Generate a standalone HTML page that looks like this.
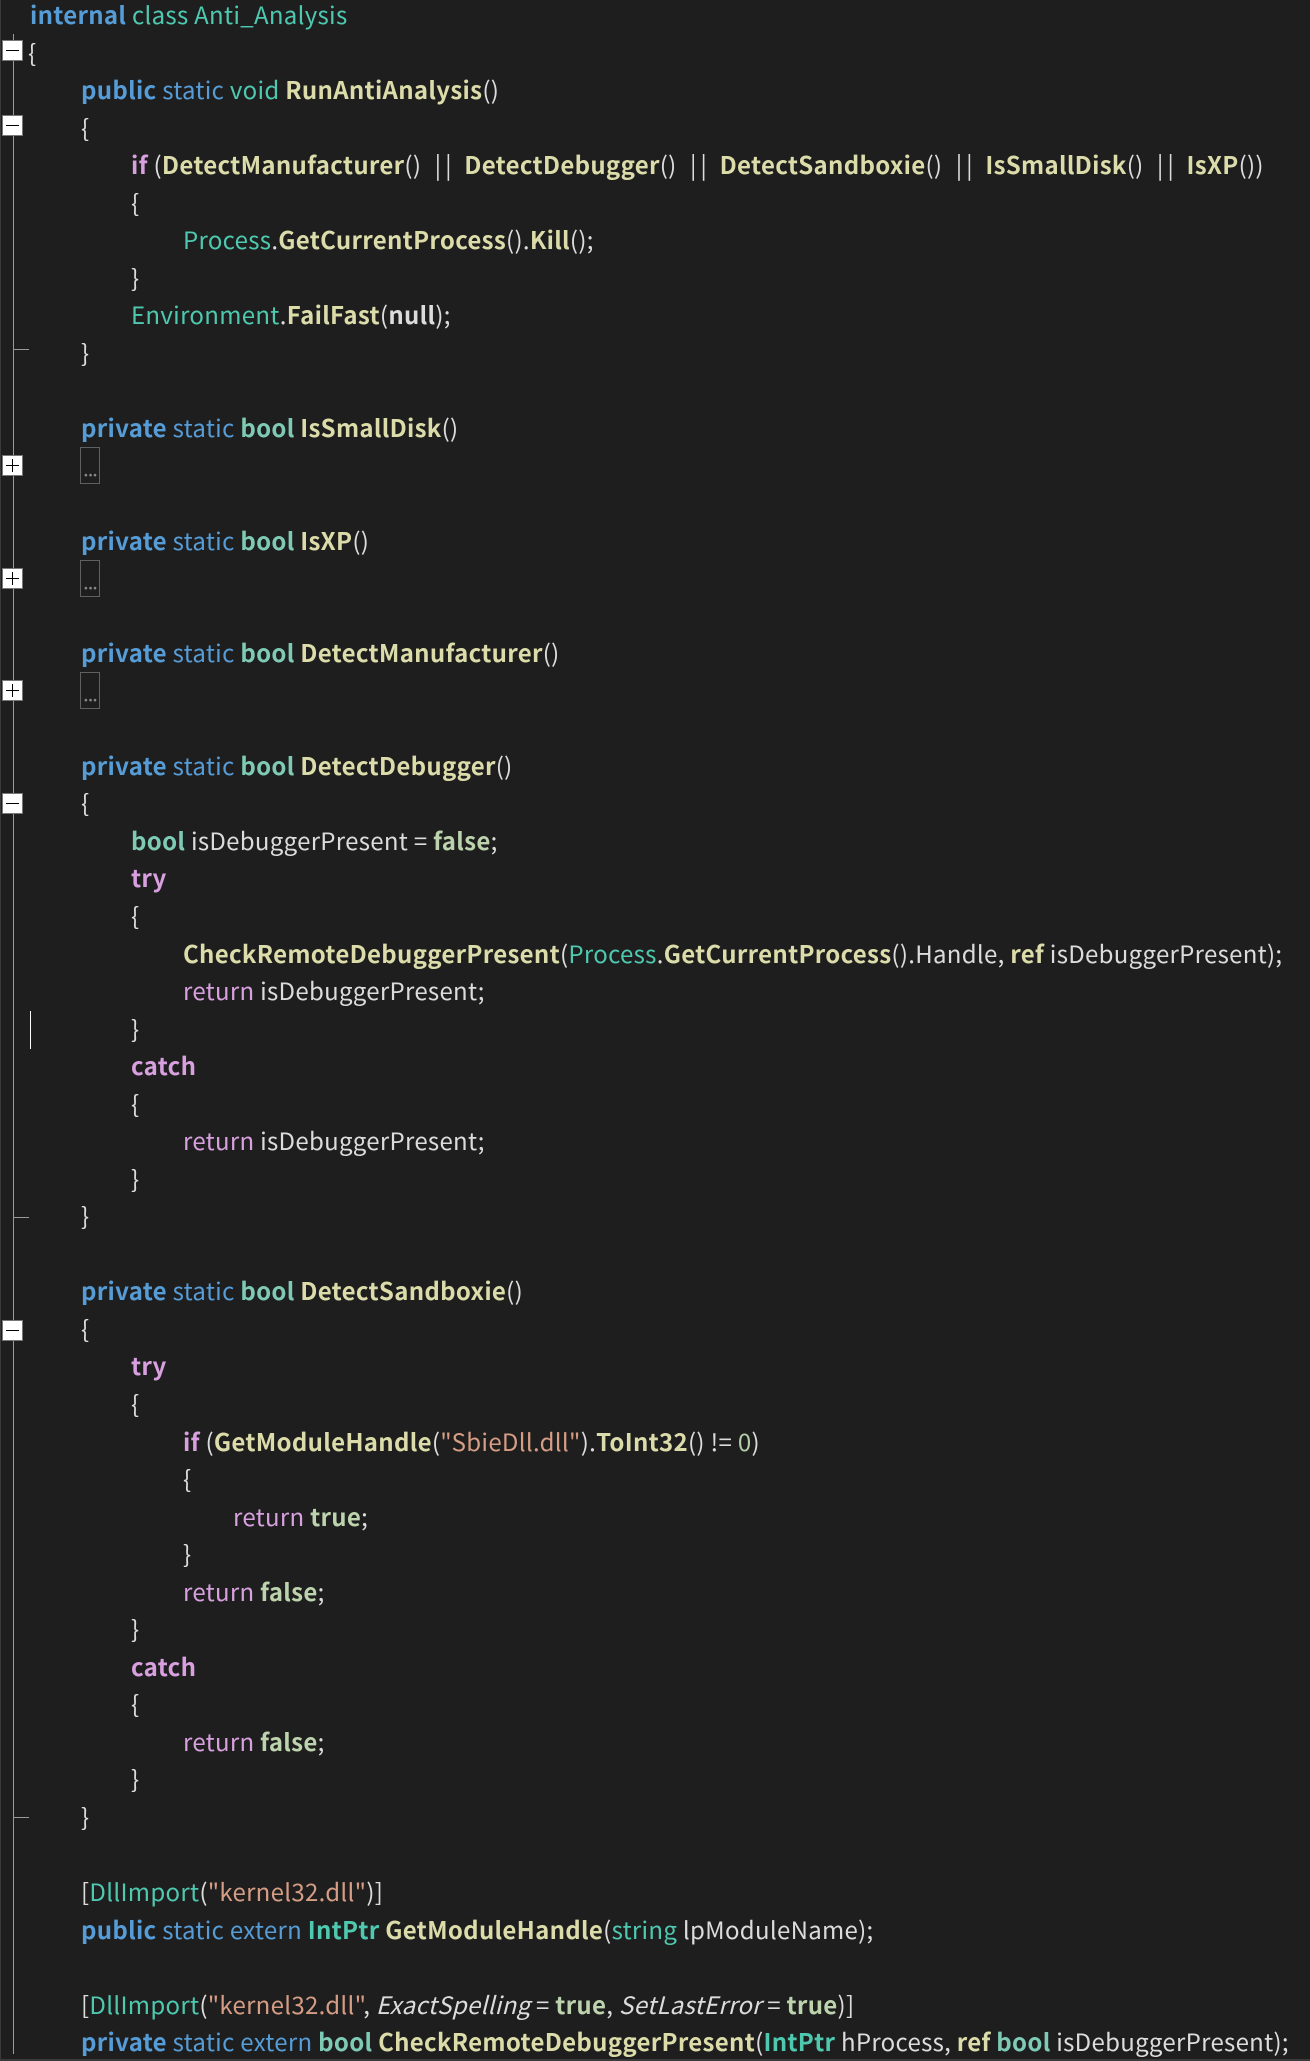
<!DOCTYPE html>
<html><head><meta charset="utf-8"><style>
html,body{margin:0;padding:0;background:#1e1e1e;}
body{width:1310px;height:2061px;position:relative;overflow:hidden;font-family:"Noto Sans CJK JP","Liberation Sans",sans-serif;font-size:24px;letter-spacing:0.3px;color:#dcdcdc;}
.l{position:absolute;left:0;height:37.54px;line-height:37.54px;white-space:nowrap;}
.b{font-weight:bold}
.kw{color:#569cd6}.ty{color:#4ec9b0}.st{color:#7ecab4}.fn{color:#dcdcaa}.ct{color:#d8a0df}.s{color:#d69d85}.n{color:#b5cea8}.lit{color:#bcd3ad}
.i{font-style:italic}
.or{letter-spacing:4px;margin:0 3px 0 4px}
.gl{position:absolute;left:13px;top:34px;width:1px;height:2020px;background:#9a9a9a}
.box{position:absolute;left:2px;width:21px;height:21px;background:#fff;border:1px solid #777;box-sizing:border-box}
.box::before{content:"";position:absolute;left:3px;right:3px;top:9px;height:1px;background:#000}
.plus::after{content:"";position:absolute;top:3px;bottom:3px;left:9px;width:1px;background:#000}
.tick{position:absolute;left:13px;width:16px;height:1px;background:#9a9a9a}
.el{position:absolute;left:80px;width:20px;height:37px;border:1px solid #606060;box-sizing:border-box;color:#888;font-size:20px;line-height:40px;text-align:center;letter-spacing:-1px}
</style></head><body>
<div style="position:absolute;left:0;top:0;width:1px;height:2061px;background:#3a3a3a"></div>
<div style="position:absolute;left:0;top:2059px;width:1310px;height:2px;background:#3a3a3a"></div>
<div class="gl"></div>
<div class="box" style="top:40px"></div>
<div class="box" style="top:115px"></div>
<div class="box plus" style="top:455px"></div>
<div class="box plus" style="top:568px"></div>
<div class="box plus" style="top:680px"></div>
<div class="box" style="top:793px"></div>
<div class="box" style="top:1320px"></div>
<div class="tick" style="top:349px"></div>
<div class="tick" style="top:1217px"></div>
<div class="tick" style="top:1817px"></div>
<div style="position:absolute;left:30px;top:1011px;width:1px;height:38px;background:#fff"></div>
<div class="el" style="top:447px">...</div>
<div class="el" style="top:560px">...</div>
<div class="el" style="top:672px">...</div>

<div class="l" style="top:-5px;left:30px"><span class="kw b">internal</span> <span class="ty">class Anti_Analysis</span></div>
<div class="l" style="top:32.5px;left:28px">{</div>
<div class="l" style="top:70px;left:81px"><span class="kw b">public</span> <span class="kw">static</span> <span class="ty">void</span> <span class="fn b">RunAntiAnalysis</span>()</div>
<div class="l" style="top:107.6px;left:81px">{</div>
<div class="l" style="top:145.2px;left:131px"><span class="ct b">if</span> (<span class="fn b">DetectManufacturer</span>()<span class="or"> ||</span> <span class="fn b">DetectDebugger</span>()<span class="or"> ||</span> <span class="fn b">DetectSandboxie</span>()<span class="or"> ||</span> <span class="fn b">IsSmallDisk</span>()<span class="or"> ||</span> <span class="fn b">IsXP</span>())</div>
<div class="l" style="top:182.7px;left:131px">{</div>
<div class="l" style="top:220.2px;left:183px"><span class="ty">Process</span>.<span class="fn b">GetCurrentProcess</span>().<span class="fn b">Kill</span>();</div>
<div class="l" style="top:257.8px;left:131px">}</div>
<div class="l" style="top:295.3px;left:131px"><span class="ty">Environment</span>.<span class="fn b">FailFast</span>(<span class="b">null</span>);</div>
<div class="l" style="top:332.9px;left:81px">}</div>
<div class="l" style="top:408px;left:81px"><span class="kw b">private</span> <span class="kw">static</span> <span class="st b">bool</span> <span class="fn b">IsSmallDisk</span>()</div>
<div class="l" style="top:520.6px;left:81px"><span class="kw b">private</span> <span class="kw">static</span> <span class="st b">bool</span> <span class="fn b">IsXP</span>()</div>
<div class="l" style="top:633.2px;left:81px"><span class="kw b">private</span> <span class="kw">static</span> <span class="st b">bool</span> <span class="fn b">DetectManufacturer</span>()</div>
<div class="l" style="top:745.8px;left:81px"><span class="kw b">private</span> <span class="kw">static</span> <span class="st b">bool</span> <span class="fn b">DetectDebugger</span>()</div>
<div class="l" style="top:783.3px;left:81px">{</div>
<div class="l" style="top:820.9px;left:131px"><span class="st b">bool</span> isDebuggerPresent = <span class="lit b">false</span>;</div>
<div class="l" style="top:858.4px;left:131px"><span class="ct b">try</span></div>
<div class="l" style="top:896px;left:131px">{</div>
<div class="l" style="top:933.5px;left:183px"><span class="fn b">CheckRemoteDebuggerPresent</span>(<span class="ty">Process</span>.<span class="fn b">GetCurrentProcess</span>().Handle, <span class="fn b">ref</span> isDebuggerPresent);</div>
<div class="l" style="top:971px;left:183px"><span class="ct">return</span> isDebuggerPresent;</div>
<div class="l" style="top:1008.6px;left:131px">}</div>
<div class="l" style="top:1046.1px;left:131px"><span class="ct b">catch</span></div>
<div class="l" style="top:1083.7px;left:131px">{</div>
<div class="l" style="top:1121.2px;left:183px"><span class="ct">return</span> isDebuggerPresent;</div>
<div class="l" style="top:1158.7px;left:131px">}</div>
<div class="l" style="top:1196.3px;left:81px">}</div>
<div class="l" style="top:1271.4px;left:81px"><span class="kw b">private</span> <span class="kw">static</span> <span class="st b">bool</span> <span class="fn b">DetectSandboxie</span>()</div>
<div class="l" style="top:1308.9px;left:81px">{</div>
<div class="l" style="top:1346.4px;left:131px"><span class="ct b">try</span></div>
<div class="l" style="top:1384px;left:131px">{</div>
<div class="l" style="top:1421.5px;left:183px"><span class="ct b">if</span> (<span class="fn b">GetModuleHandle</span>(<span class="s">"SbieDll.dll"</span>).<span class="fn b">ToInt32</span>() != <span class="n">0</span>)</div>
<div class="l" style="top:1459.1px;left:183px">{</div>
<div class="l" style="top:1496.6px;left:233px"><span class="ct">return</span> <span class="lit b">true</span>;</div>
<div class="l" style="top:1534.2px;left:183px">}</div>
<div class="l" style="top:1571.7px;left:183px"><span class="ct">return</span> <span class="lit b">false</span>;</div>
<div class="l" style="top:1609.2px;left:131px">}</div>
<div class="l" style="top:1646.8px;left:131px"><span class="ct b">catch</span></div>
<div class="l" style="top:1684.3px;left:131px">{</div>
<div class="l" style="top:1721.9px;left:183px"><span class="ct">return</span> <span class="lit b">false</span>;</div>
<div class="l" style="top:1759.4px;left:131px">}</div>
<div class="l" style="top:1797px;left:81px">}</div>
<div class="l" style="top:1872px;left:81px">[<span class="ty">DllImport</span>(<span class="s">"kernel32.dll"</span>)]</div>
<div class="l" style="top:1909.6px;left:81px"><span class="kw b">public</span> <span class="kw">static extern</span> <span class="ty b">IntPtr</span> <span class="fn b">GetModuleHandle</span>(<span class="ty">string</span> lpModuleName);</div>
<div class="l" style="top:1984.7px;left:81px">[<span class="ty">DllImport</span>(<span class="s">"kernel32.dll"</span>, <span class="i">ExactSpelling</span> = <span class="lit b">true</span>, <span class="i">SetLastError</span> = <span class="lit b">true</span>)]</div>
<div class="l" style="top:2022.2px;left:81px"><span class="kw b">private</span> <span class="kw">static extern</span> <span class="st b">bool</span> <span class="fn b">CheckRemoteDebuggerPresent</span>(<span class="ty b">IntPtr</span> hProcess, <span class="fn b">ref</span> <span class="st b">bool</span> isDebuggerPresent);</div>
</body></html>
